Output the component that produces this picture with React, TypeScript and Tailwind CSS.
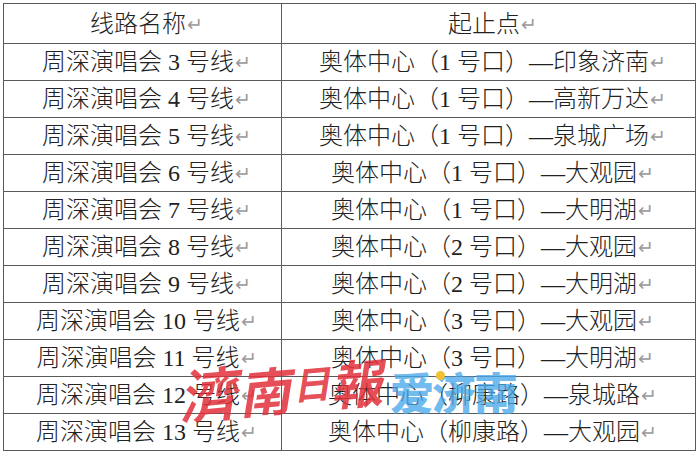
import React from "react";

const rows: [string, string][] = [
  ["周深演唱会 3 号线", "奥体中心（1 号口）—印象济南"],
  ["周深演唱会 4 号线", "奥体中心（1 号口）—高新万达"],
  ["周深演唱会 5 号线", "奥体中心（1 号口）—泉城广场"],
  ["周深演唱会 6 号线", "奥体中心（1 号口）—大观园"],
  ["周深演唱会 7 号线", "奥体中心（1 号口）—大明湖"],
  ["周深演唱会 8 号线", "奥体中心（2 号口）—大观园"],
  ["周深演唱会 9 号线", "奥体中心（2 号口）—大明湖"],
  ["周深演唱会 10 号线", "奥体中心（3 号口）—大观园"],
  ["周深演唱会 11 号线", "奥体中心（3 号口）—大明湖"],
  ["周深演唱会 12 号线", "奥体中心（柳康路）—泉城路"],
  ["周深演唱会 13 号线", "奥体中心（柳康路）—大观园"],
];

function Mark() {
  return (
    <span className="ml-[1px] text-[19px] text-[#9a9a9a] font-['DejaVu_Sans',sans-serif] font-light align-[1px]">
      ↵
    </span>
  );
}

export default function App() {
  return (
    <div className="w-[700px] h-[455px] bg-white overflow-hidden relative font-['Liberation_Serif','Noto_Sans_CJK_SC',serif] font-light text-[24px] leading-none text-[#222]">
      <div className="pl-[3px] pt-[3px]">
        <table className="border-collapse w-[693px] table-fixed">
          <colgroup>
            <col className="w-[278px]" />
            <col />
          </colgroup>
          <thead>
            <tr className="h-[40px]">
              <td className="border border-[#5a5a5a] text-center pl-[8px] align-middle">
                线路名称
                <Mark />
              </td>
              <td className="border border-[#5a5a5a] text-center pl-[8px] align-middle">
                起止点
                <Mark />
              </td>
            </tr>
          </thead>
          <tbody>
            {rows.map(([a, b]) => (
              <tr key={a} className="h-[37px]">
                <td className="border border-[#5a5a5a] text-center pl-[8px] align-middle whitespace-nowrap">
                  {a}
                  <Mark />
                </td>
                <td className="border border-[#5a5a5a] text-center pl-[8px] align-middle whitespace-nowrap">
                  {b}
                  <Mark />
                </td>
              </tr>
            ))}
          </tbody>
        </table>
      </div>

      <div className="absolute left-[184px] top-[356px] flex items-end gap-[1px] text-[#e2303a]/85 font-['Noto_Sans_CJK_TC',sans-serif] font-bold -rotate-[5deg] pointer-events-none">
        <span className="text-[58px] leading-none skew-x-[-14deg] inline-block">濟</span>
        <span className="text-[52px] leading-none skew-x-[-14deg] inline-block">南</span>
        <span className="text-[38px] leading-none skew-x-[-14deg] inline-block mb-[10px]">日</span>
        <span className="text-[52px] leading-none skew-x-[-14deg] inline-block">報</span>
      </div>

      <div className="absolute left-[390px] top-[369px] flex items-center text-[#4aa8ea]/80 font-['Noto_Sans_CJK_SC',sans-serif] font-black text-[44px] leading-none tracking-[-2px] pointer-events-none">
        <span>爱</span>
        <span className="relative">
          济
          <span className="absolute left-[4px] top-[2px] w-[9px] h-[9px] rounded-full bg-[#f5c030]" />
        </span>
        <span>南</span>
      </div>
    </div>
  );
}
